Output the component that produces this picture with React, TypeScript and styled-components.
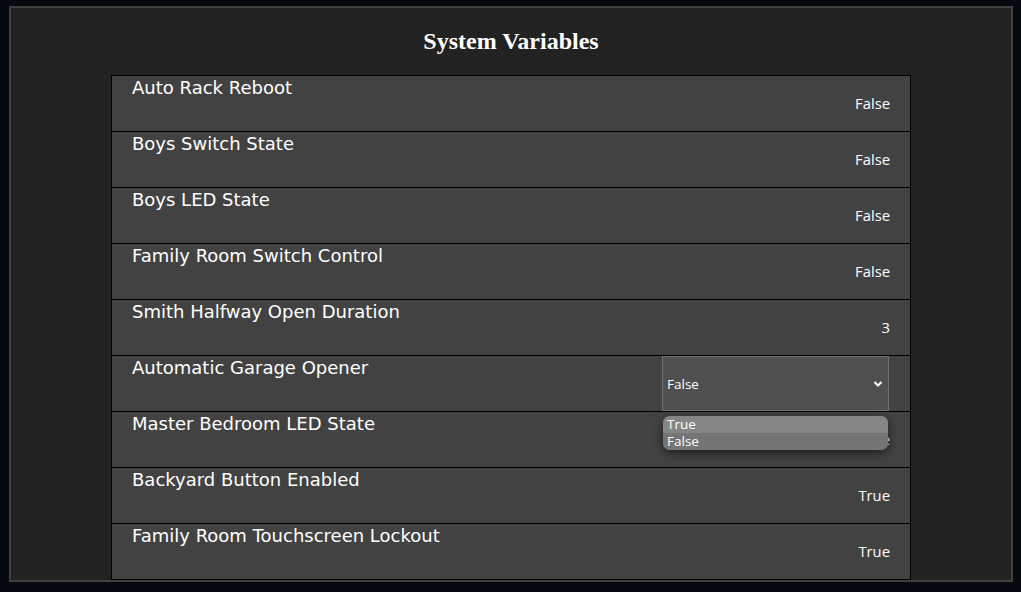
import React from "react";
import styled, { createGlobalStyle } from "styled-components";

const GlobalStyle = createGlobalStyle`
  html, body {
    margin: 0;
    padding: 0;
    background: #050a11;
  }
  body {
    font-family: "DejaVu Sans", Verdana, sans-serif;
    color: #ffffff;
  }
`;

const Page = styled.div`
  padding: 6px 8px 9px 9px;
`;

const Panel = styled.section`
  background: #222222;
  border: 2px solid #404040;
`;

const Title = styled.h2`
  margin: 20px 0 20px;
  text-align: center;
  font-family: "Liberation Serif", "Times New Roman", serif;
  font-size: 24px;
  font-weight: bold;
  line-height: normal;
  color: #ffffff;
`;

const Table = styled.div`
  width: 800px;
  margin: 0 auto;
  box-sizing: border-box;
  border: 1px solid #000000;
  border-bottom: none;
  background: #424242;
`;

const Row = styled.div`
  display: flex;
  justify-content: space-between;
  height: 55px;
  padding: 0 20px;
  border-bottom: 1px solid #000000;
`;

const Label = styled.div`
  align-self: flex-start;
  padding-top: 2px;
  font-family: "DejaVu Sans", Verdana, sans-serif;
  font-size: 18px;
  line-height: 20px;
  color: #ffffff;
  white-space: nowrap;
`;

const Value = styled.div`
  align-self: center;
  font-family: "Open Sans", "Segoe UI", sans-serif;
  font-size: 14.8px;
  line-height: 17px;
  color: #ffffff;
`;

const SelectWrap = styled.div`
  position: relative;
  align-self: stretch;
  width: 227px;
  margin-right: 1px;
`;

const SelectBox = styled.div`
  box-sizing: border-box;
  height: 100%;
  display: flex;
  align-items: center;
  justify-content: space-between;
  padding: 0 5px 0 4px;
  background: #505050;
  border: 1px solid #737373;
  font-family: "Open Sans", "Segoe UI", sans-serif;
  font-size: 13.5px;
  color: #ffffff;
`;

const Chevron = styled.svg`
  width: 10px;
  height: 8px;
  margin-top: 1px;
`;

const Menu = styled.div`
  position: absolute;
  top: 60px;
  left: 1px;
  right: 1px;
  border-radius: 7px;
  overflow: hidden;
  background: #757575;
  box-shadow: 0 3px 10px rgba(0, 0, 0, 0.55);
  z-index: 2;
`;

const Option = styled.div<{ $active?: boolean }>`
  height: 17px;
  padding: 0 4px;
  display: flex;
  align-items: center;
  background: ${(p) => (p.$active ? "#858585" : "#757575")};
  font-family: "Open Sans", "Segoe UI", sans-serif;
  font-size: 13.5px;
  line-height: 17px;
  color: #ffffff;
`;

type Item = { label: string; value: string; select?: boolean };

const items: Item[] = [
  { label: "Auto Rack Reboot", value: "False" },
  { label: "Boys Switch State", value: "False" },
  { label: "Boys LED State", value: "False" },
  { label: "Family Room Switch Control", value: "False" },
  { label: "Smith Halfway Open Duration", value: "3" },
  { label: "Automatic Garage Opener", value: "False", select: true },
  { label: "Master Bedroom LED State", value: "False" },
  { label: "Backyard Button Enabled", value: "True" },
  { label: "Family Room Touchscreen Lockout", value: "True" },
];

export default function App() {
  return (
    <>
      <GlobalStyle />
      <Page>
        <Panel>
          <Title>System Variables</Title>
          <Table>
            {items.map((it) => (
              <Row key={it.label}>
                <Label>{it.label}</Label>
                {it.select ? (
                  <SelectWrap>
                    <SelectBox>
                      <span>{it.value}</span>
                      <Chevron viewBox="0 0 10 8">
                        <path
                          d="M1.5 2 L5 5.5 L8.5 2"
                          fill="none"
                          stroke="#ffffff"
                          strokeWidth="2"
                        />
                      </Chevron>
                    </SelectBox>
                    <Menu>
                      <Option $active>True</Option>
                      <Option>False</Option>
                    </Menu>
                  </SelectWrap>
                ) : (
                  <Value>{it.value}</Value>
                )}
              </Row>
            ))}
          </Table>
        </Panel>
      </Page>
    </>
  );
}
